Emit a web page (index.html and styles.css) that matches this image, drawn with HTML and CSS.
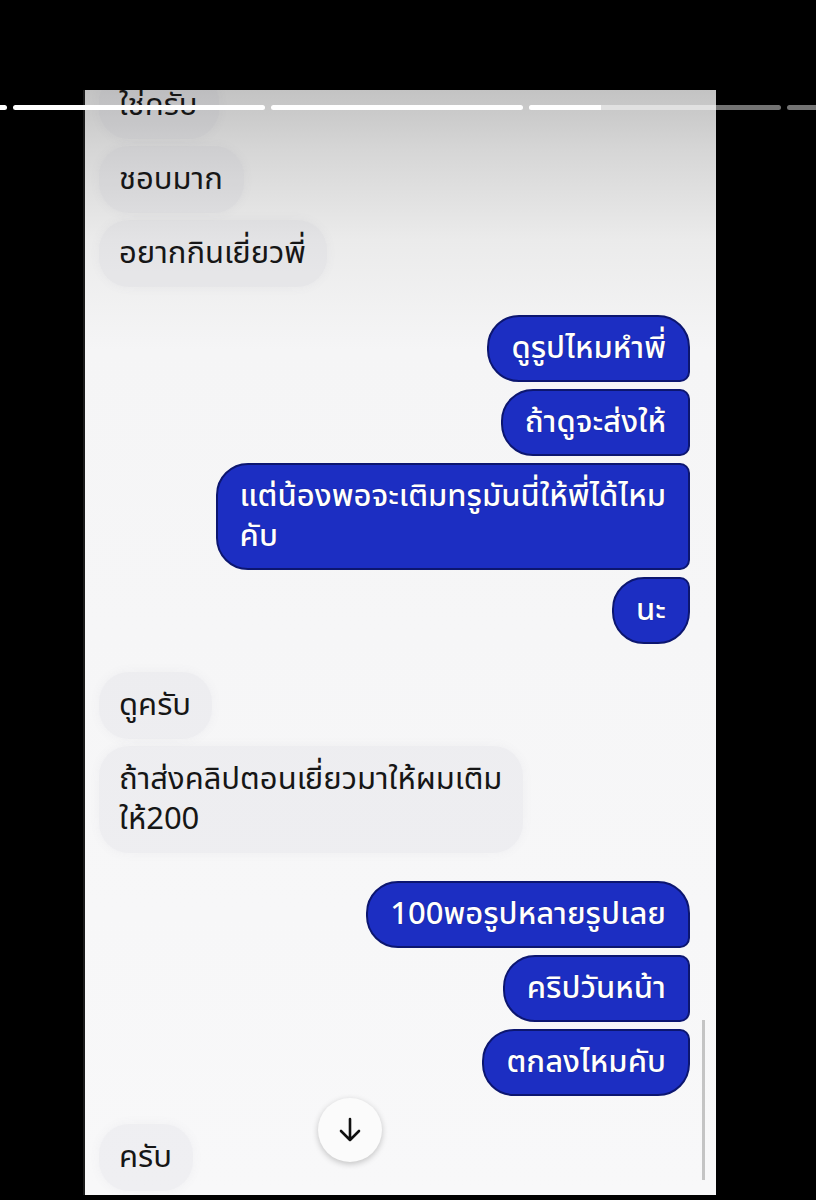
FILE: index.html
```html
<!DOCTYPE html>
<html lang="th">
<head>
<meta charset="utf-8">
<title>Chat</title>
<link rel="stylesheet" href="styles.css">
</head>
<body>
<div class="frame">
  <div class="screen">
    <div class="chat">
      <div class="msg in first">ใช่ครับ</div>
      <div class="msg in">ชอบมาก</div>
      <div class="msg in">อยากกินเยี่ยวพี่</div>

      <div class="msg out top group">ดูรูปไหมหำพี่</div>
      <div class="msg out mid">ถ้าดูจะส่งให้</div>
      <div class="msg out mid">แต่น้องพอจะเติมทรูมันนี่ให้พี่ได้ไหม<br>คับ</div>
      <div class="msg out end">นะ</div>

      <div class="msg in group">ดูครับ</div>
      <div class="msg in">ถ้าส่งคลิปตอนเยี่ยวมาให้ผมเติม<br>ให้200</div>

      <div class="msg out top group">100พอรูปหลายรูปเลย</div>
      <div class="msg out mid">คริปวันหน้า</div>
      <div class="msg out end">ตกลงไหมคับ</div>

      <div class="msg in group">ครับ</div>
    </div>
    <div class="scrollbar"></div>
    <button class="down" aria-label="scroll down">
      <svg width="24" height="26" viewBox="0 0 24 26"><path d="M12 2 V23 M3 14 L12 23 L21 14" fill="none" stroke="#111" stroke-width="2.6" stroke-linecap="round" stroke-linejoin="round"/></svg>
    </button>
  </div>
  <div class="progress">
    <span class="seg done"></span>
    <span class="seg done"></span>
    <span class="seg done"></span>
    <span class="seg part"><i></i></span>
    <span class="seg"></span>
  </div>
</div>
</body>
</html>
```
FILE: styles.css
```css
html, body {
  margin: 0;
  padding: 0;
  background: #000;
}
body {
  width: 816px;
  height: 1200px;
  overflow: hidden;
  font-family: "Noto Sans Thai", "Noto Sans", "DejaVu Sans", sans-serif;
}
.frame {
  position: relative;
  width: 816px;
  height: 1200px;
  padding-top: 90px;
  box-sizing: border-box;
}
.screen {
  position: relative;
  margin-left: 83px;
  width: 633px;
  height: 1105px;
  overflow: hidden;
  background: linear-gradient(#c3c3c3 0px, #d6d6d6 60px, #ebebeb 150px, #f5f5f6 260px, #f8f8f9 100%);
  border-left: 2px solid #1a1a1a;
  box-sizing: border-box;
}
.chat {
  display: flex;
  flex-direction: column;
  gap: 7px;
  padding: 0 26px 0 14px;
  margin-top: -18px;
}
.msg {
  font-size: 31px;
  line-height: 40px;
  padding: 13.5px 21px 13.5px 20px;
  border-radius: 30px;
  white-space: nowrap;
}
.msg.in {
  align-self: flex-start;
  color: #161616;
  background: rgba(110, 110, 130, 0.06);
  box-shadow: 0 0 8px 2px rgba(110, 110, 130, 0.045);
}
.msg.out {
  align-self: flex-end;
  color: #fff;
  font-weight: 500;
  padding: 11.5px 22px;
  background: #1c2ec2;
  border: 2px solid #0c1670;
  text-shadow: 0 0 1px #0a1460;
}
.msg.out.top { border-radius: 32px 32px 10px 32px; }
.msg.out.mid { border-radius: 32px 10px 10px 32px; }
.msg.out.end { border-radius: 32px 10px 32px 32px; }
.msg.group { margin-top: 21px; }
.scrollbar {
  position: absolute;
  right: 11px;
  top: 930px;
  width: 3px;
  height: 160px;
  background: #c4c4c4;
}
.down {
  position: absolute;
  left: 233px;
  top: 1008px;
  width: 64px;
  height: 64px;
  border-radius: 50%;
  border: none;
  background: #fbfbfb;
  box-shadow: 0 2px 6px rgba(0, 0, 0, 0.22);
  display: flex;
  align-items: center;
  justify-content: center;
  padding: 0;
}
.progress {
  position: absolute;
  top: 105px;
  left: -245px;
  display: flex;
  gap: 6px;
}
.seg {
  width: 252px;
  height: 5px;
  border-radius: 3px;
  background: rgba(255, 255, 255, 0.45);
  overflow: hidden;
}
.seg.done { background: #fff; }
.seg.part i {
  display: block;
  width: 72px;
  height: 100%;
  background: #fff;
}
```
